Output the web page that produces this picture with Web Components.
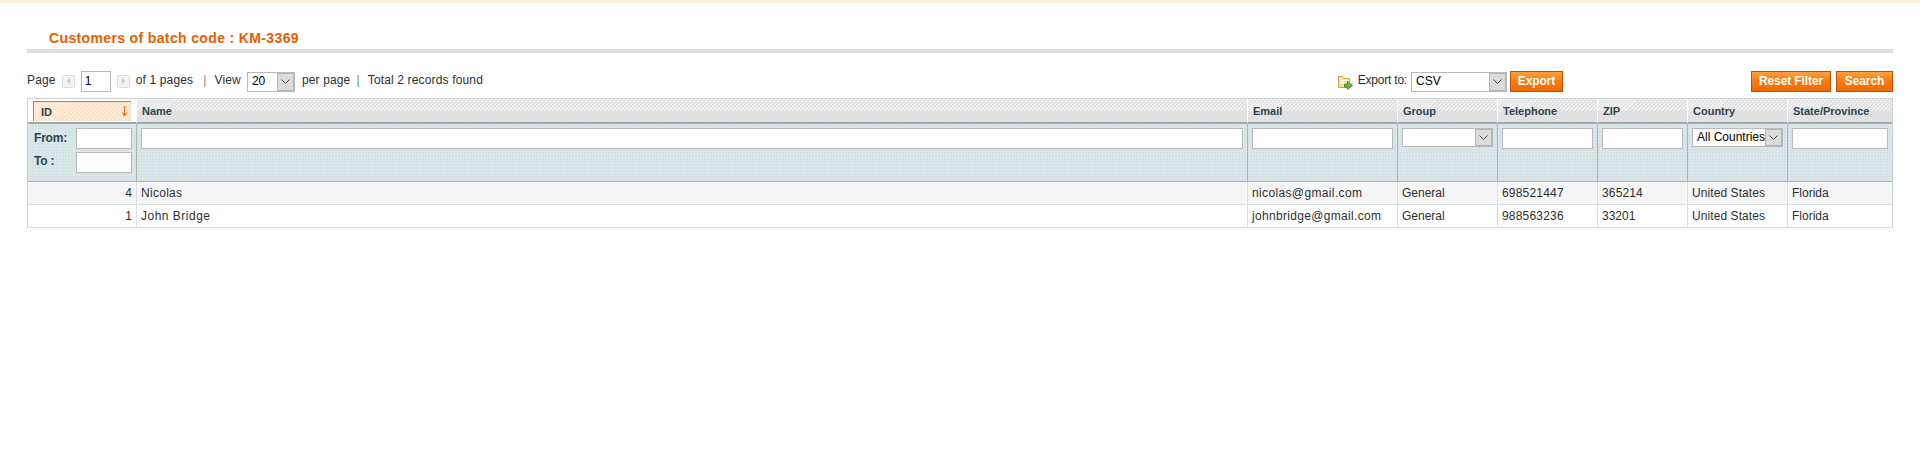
<!DOCTYPE html>
<html>
<head>
<meta charset="utf-8">
<title>Customers of batch code</title>
<style>
html, body { margin: 0; padding: 0; background: #fff; }
body { font: 12px "Liberation Sans", Arial, sans-serif; color: #2f2f2f; --cols: 109px 1111px 150px 100px 100px 90px 100px 104px; }
</style>
</head>
<body>
<batch-page>
  <page-heading slot="heading">Customers of batch code : KM-3369</page-heading>
  <grid-toolbar slot="toolbar"></grid-toolbar>
  <data-grid slot="grid">
    <grid-row kind="head">
      <head-cell sorted>ID</head-cell>
      <head-cell>Name</head-cell>
      <head-cell>Email</head-cell>
      <head-cell>Group</head-cell>
      <head-cell>Telephone</head-cell>
      <head-cell>ZIP</head-cell>
      <head-cell>Country</head-cell>
      <head-cell>State/Province</head-cell>
    </grid-row>
    <grid-row kind="filter">
      <filter-cell><range-filter></range-filter></filter-cell>
      <filter-cell><text-box></text-box></filter-cell>
      <filter-cell><text-box></text-box></filter-cell>
      <filter-cell><drop-down style="width:91px;height:19px"></drop-down></filter-cell>
      <filter-cell><text-box></text-box></filter-cell>
      <filter-cell><text-box></text-box></filter-cell>
      <filter-cell><drop-down style="width:91px;height:19px">All Countries</drop-down></filter-cell>
      <filter-cell><text-box></text-box></filter-cell>
    </grid-row>
    <grid-row kind="even">
      <data-cell num>4</data-cell><data-cell style="letter-spacing:.28px">Nicolas</data-cell><data-cell style="letter-spacing:.36px">nicolas@gmail.com</data-cell><data-cell>General</data-cell><data-cell style="letter-spacing:.2px">698521447</data-cell><data-cell style="letter-spacing:.15px">365214</data-cell><data-cell style="letter-spacing:.08px">United States</data-cell><data-cell>Florida</data-cell>
    </grid-row>
    <grid-row>
      <data-cell num>1</data-cell><data-cell style="letter-spacing:.5px">John Bridge</data-cell><data-cell style="letter-spacing:.32px">johnbridge@gmail.com</data-cell><data-cell>General</data-cell><data-cell style="letter-spacing:.2px">988563236</data-cell><data-cell>33201</data-cell><data-cell style="letter-spacing:.08px">United States</data-cell><data-cell>Florida</data-cell>
    </grid-row>
  </data-grid>
</batch-page>

<script>
// small helper, every element just gets its html put in an open shadow root
function shadow(el, html) {
    el.attachShadow({ mode: 'open' }).innerHTML = html;
}

class BatchPage extends HTMLElement {
    constructor() {
        super();
        shadow(this, `
<style>
:host { display: block; padding: 0 27px; border-top: 3px solid #fdf1dc; height: 470px; box-sizing: content-box; }
</style>
<slot name="heading"></slot>
<slot name="toolbar"></slot>
<slot name="grid"></slot>`);
    }
}

class PageHeading extends HTMLElement {
    constructor() {
        super();
        shadow(this, `
<style>
:host { display: block; height: 47px; box-sizing: border-box; padding: 24px 0 0 22px; border-bottom: 4px solid #dddddd; margin-top: 3px;
  font: bold 14px/17px "Liberation Sans", Arial, sans-serif; letter-spacing: .36px; color: #eb5e00; white-space: nowrap; }
</style>
<slot></slot>`);
    }
}

class ActionButton extends HTMLElement {
    constructor() {
        super();
        shadow(this, `
<style>
:host { display: block; box-sizing: border-box; height: 21px; border: 1px solid #c15100; white-space: nowrap; letter-spacing: -.1px;
  background: linear-gradient(#f9a13d, #f87c12 45%, #f06a00); color: #fff; font: bold 12px/18px "Liberation Sans", Arial, sans-serif; text-align: center; }
</style>
<slot></slot>`);
    }
}

class TextBox extends HTMLElement {
    constructor() {
        super();
        shadow(this, `
<style>
:host { display: block; box-sizing: border-box; height: 21px; border: 1px solid #b9b9b9; background: #fff; padding-left: 3px;
  font: 12px/19px "Liberation Sans", Arial, sans-serif; letter-spacing: 0; color: #000; }
</style>
<slot></slot>`);
    }
}

class DropDown extends HTMLElement {
    constructor() {
        super();
        shadow(this, `
<style>
:host { display: flex; box-sizing: border-box; height: 20px; border: 1px solid #b9b9b9; background: #fff;
  font: 12px/17px "Liberation Sans", Arial, sans-serif; letter-spacing: 0; color: #000; }
.value { flex: 1; min-width: 0; padding-left: 4px; overflow: hidden; white-space: nowrap; }
.arrow { flex: none; width: 17px; background: #dcdcdc; box-shadow: inset 0 0 0 1px #b4b4b4; display: flex; align-items: center; justify-content: center; }
svg { display: block; }
</style>
<div class="value"><slot></slot></div>
<div class="arrow"><svg width="9" height="5" viewBox="0 0 9 5"><path d="M.5.5l4 4 4-4" fill="none" stroke="#444" stroke-width="1"/></svg></div>`);
    }
}

class PagerArrow extends HTMLElement {
    constructor() {
        super();
        const pts = this.getAttribute('dir') === 'next' ? '5,3 8,6 5,9' : '8,3 5,6 8,9';
        shadow(this, `
<style>
:host { display: block; width: 13px; height: 13px; }
svg { display: block; }
</style>
<svg width="13" height="13" viewBox="0 0 13 13"><rect x=".5" y=".5" width="12" height="12" rx="1" fill="#f3f3f3" stroke="#dcdcdc"/><polygon points="${pts}" fill="#c8c8c8"/></svg>`);
    }
}

class GridToolbar extends HTMLElement {
    constructor() {
        super();
        shadow(this, `
<style>
:host { display: flex; align-items: center; height: 21px; margin-top: 18px; margin-bottom: 6px; font: 12px/21px "Liberation Sans", Arial, sans-serif; color: #2f2f2f; }
.group { display: flex; align-items: center; }
.group > span { padding-bottom: 2px; }
.pager > span { letter-spacing: .15px; }
.sep { color: #6f8992; }
.export { margin-left: auto; margin-right: 188px; }
.export > span { letter-spacing: -.2px; }
.actions { gap: 5px; }
</style>
<div class="group pager">
  <span>Page</span>
  <pager-arrow dir="prev" style="margin-left:6px"></pager-arrow>
  <text-box style="width:30px;margin-left:6px">1</text-box>
  <pager-arrow dir="next" style="margin-left:6px"></pager-arrow>
  <span style="margin-left:6px">of 1 pages</span>
  <span class="sep" style="margin-left:10px">|</span>
  <span style="margin-left:8px">View</span>
  <drop-down style="width:48px;margin-left:6px">20</drop-down>
  <span style="margin-left:7px">per page</span>
  <span class="sep" style="margin-left:6px">|</span>
  <span style="margin-left:8px">Total 2 records found</span>
</div>
<div class="group export">
  <svg width="15" height="16" viewBox="0 0 15 16">
    <path d="M.5 2.500V13.500H11.500V4.500H5.500L4.500 2.500Z" fill="#fbe6a8" stroke="#d0a04a"/>
    <path d="M2.500 6.500H9.500M2.500 8.500H6" stroke="#fff"/>
    <path d="M6.500 10h3V7.500l5 4-5 4V13h-3Z" fill="#6cb33f" stroke="#3f7f22" stroke-width=".8"/>
  </svg>
  <span style="margin-left:5px">Export to:</span>
  <drop-down style="width:96px;margin-left:4px">CSV</drop-down>
  <action-button style="width:53px;margin-left:3px">Export</action-button>
</div>
<div class="group actions">
  <action-button style="width:80px">Reset Filter</action-button>
  <action-button style="width:57px">Search</action-button>
</div>`);
    }
}

class DataGrid extends HTMLElement {
    constructor() {
        super();
        shadow(this, `
<style>
:host { display: block; border: 1px solid #cbd3d4; border-bottom: 0; }
</style>
<slot></slot>`);
    }
}

class GridRow extends HTMLElement {
    constructor() {
        super();
        const kind = this.getAttribute('kind') || '';
        const look = {
            head: 'height:25px;background:#fff;',
            filter: 'height:58px;background:linear-gradient(90deg,#dde8ea 1px,#0000 1px) 0 0/3px 3px,linear-gradient(#dde8ea 1px,#0000 1px) 0 0/3px 3px,#d3e1e4;border-bottom:1px solid #a9b4b6;',
            even: 'height:23px;background:#f6f6f6;border-bottom:1px solid #dadfe0;'
        }[kind] || 'height:23px;background:#fff;border-bottom:1px solid #dadfe0;';
        shadow(this, `
<style>
:host { display: grid; box-sizing: border-box; grid-template-columns: var(--cols); ${look} }
</style>
<slot></slot>`);
    }
}

class HeadCell extends HTMLElement {
    constructor() {
        super();
        const sorted = this.hasAttribute('sorted');
        shadow(this, `
<style>
:host { display: block; box-sizing: border-box; height: 25px; border-bottom: 2px solid #a0a8aa; border-right: 1px solid #fff;
  font: bold 11px/24px "Liberation Sans", Arial, sans-serif; color: #2d444f; padding-left: 5px; position: relative;
  background: linear-gradient(#0000 50%, #dcdcdc99 50%), repeating-linear-gradient(135deg, #dedede 0 1.4px, #f0f0f0 1.4px 2.83px); }
:host(:last-child) { border-right: 0; }
:host([sorted]) { padding: 2px 5px 0 5px; background: #fff; }
.tab { display: flex; box-sizing: border-box; height: 20px; line-height: 21px; justify-content: space-between; padding: 0 3px 0 7px; border: solid #8a8a8a; border-width: 1px 0 0 1px;
  background: repeating-linear-gradient(135deg, #fbdfc2 0 1.4px, #fdeedd 1.4px 2.83px); }
svg { display: block; margin-top: 3px; }
</style>
${sorted ? `<div class="tab"><span><slot></slot></span><svg width="7" height="12" viewBox="0 0 7 12"><path d="M3.500 1V10M1.500 7.500L3.500 11 5.500 7.500" fill="none" stroke="#f26a10" stroke-width="1"/></svg></div>` : `<slot></slot>`}`);
    }
}

class FilterCell extends HTMLElement {
    constructor() {
        super();
        shadow(this, `
<style>
:host { display: block; box-sizing: border-box; padding: 4px 4px 0 4px; border-right: 1px solid #a9b4b6; }
:host(:last-child) { border-right: 0; }
</style>
<slot></slot>`);
    }
}

class RangeFilter extends HTMLElement {
    constructor() {
        super();
        shadow(this, `
<style>
:host { display: grid; grid-template-columns: 1fr 56px; row-gap: 3px; font: bold 12px/21px "Liberation Sans", Arial, sans-serif; letter-spacing: -.2px; color: #2d444f; margin-left: 2px; }
.to { line-height: 19px; }
</style>
<span>From:</span><text-box></text-box>
<span class="to">To :</span><text-box></text-box>`);
    }
}

class DataCell extends HTMLElement {
    constructor() {
        super();
        shadow(this, `
<style>
:host { display: block; box-sizing: border-box; padding: 0 4px; border-right: 1px solid #dadfe0; font: 12px/22px "Liberation Sans", Arial, sans-serif; color: #2f2f2f; white-space: nowrap; }
:host(:last-child) { border-right: 0; }
:host([num]) { text-align: right; }
</style>
<slot></slot>`);
    }
}

customElements.define('batch-page', BatchPage);
customElements.define('page-heading', PageHeading);
customElements.define('action-button', ActionButton);
customElements.define('text-box', TextBox);
customElements.define('drop-down', DropDown);
customElements.define('pager-arrow', PagerArrow);
customElements.define('grid-toolbar', GridToolbar);
customElements.define('data-grid', DataGrid);
customElements.define('grid-row', GridRow);
customElements.define('head-cell', HeadCell);
customElements.define('filter-cell', FilterCell);
customElements.define('range-filter', RangeFilter);
customElements.define('data-cell', DataCell);
</script>
</body>
</html>
